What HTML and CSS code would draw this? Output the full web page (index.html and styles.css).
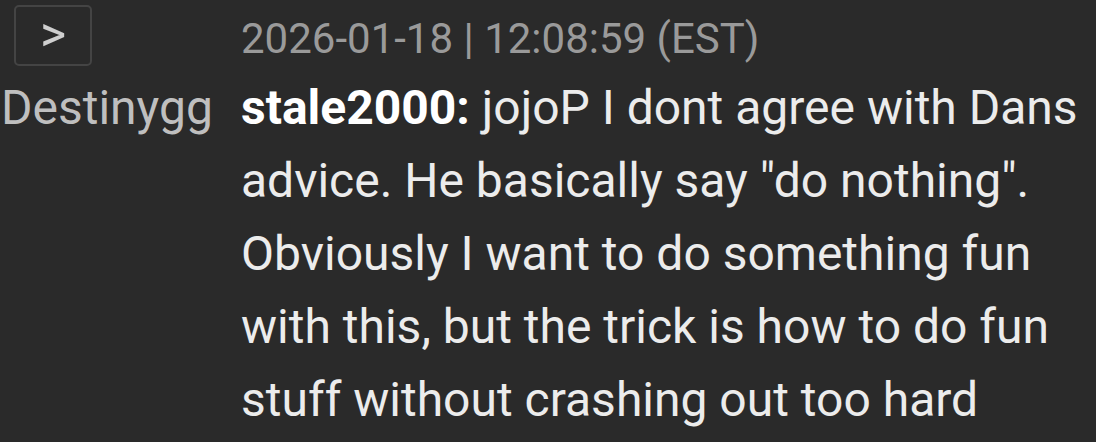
FILE: index.html
```html
<!DOCTYPE html>
<html>
<head>
<meta charset="utf-8">
<link rel="stylesheet" href="styles.css">
</head>
<body>
<div class="chat">
  <div class="row header">
    <div class="side"><span class="toggle">&gt;</span></div>
    <div class="time">2026-01-18 | 12:08:59 (EST)</div>
  </div>
  <div class="row">
    <div class="side channel">Destinygg</div>
    <div class="msg"><span class="user">stale2000:</span> jojoP I dont agree with Dans advice. He basically say "do nothing". Obviously I want to do something fun with this, but the trick is how to do fun stuff without crashing out too hard</div>
  </div>
</div>
</body>
</html>
```
FILE: styles.css
```css
html, body {
  margin: 0;
  padding: 0;
  background: #2a2a2a;
}
body {
  width: 1096px;
  height: 442px;
  overflow: hidden;
  font-family: Roboto, "Liberation Sans", sans-serif;
}
.chat {
  display: flex;
  flex-direction: column;
  padding: 5px 0 0 1px;
}
.row {
  display: flex;
  align-items: flex-start;
}
.side {
  width: 240px;
  flex: none;
}
.header {
  height: 66px;
  align-items: flex-start;
}
.header .side {
  padding-left: 13px;
  box-sizing: border-box;
}
.toggle {
  display: flex;
  align-items: center;
  justify-content: center;
  width: 78px;
  height: 61px;
  border: 2px solid #444444;
  border-radius: 5px;
  box-sizing: border-box;
  color: #cfcfcf;
  font-size: 50px;
  line-height: 1;
  padding-bottom: 4px;
}
.time {
  color: #9a9a9a;
  font-size: 42px;
  line-height: 1;
  padding-top: 13px;
}
.channel {
  color: #bfbfbf;
  font-size: 48px;
  line-height: 73px;
}
.msg {
  flex: 1;
  color: #ececec;
  font-size: 48px;
  line-height: 73px;
  padding-right: 10px;
}
.user {
  font-weight: 700;
  color: #ffffff;
}
```
